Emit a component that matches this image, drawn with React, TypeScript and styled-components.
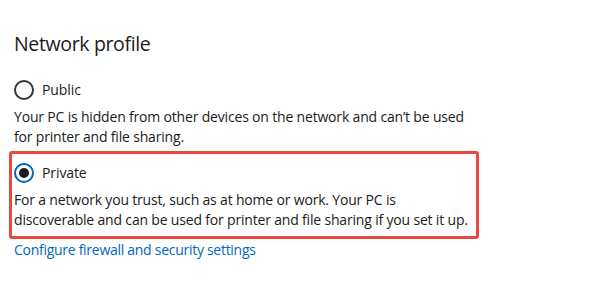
import React from 'react';
import styled, {createGlobalStyle} from "styled-components";

const GlobalStyle = createGlobalStyle`
    body {
        margin: 0;
        background: #ffffff;
        font-family: 'Open Sans', 'Noto Sans', sans-serif;
        color: #1b1b1b;
    }
`

type RadioProps = {
    checked?: boolean;
}

const Option = ({label, checked, children}: { label: string, checked?: boolean, children: React.ReactNode }) => (
    <>
        <RadioRow>
            <RadioCircle checked={checked}/>
            <Label>{label}</Label>
        </RadioRow>
        <Description>{children}</Description>
    </>
);

export default function App() {
    return (
        <>
            <GlobalStyle/>
            <Page>
                <Title>Network profile</Title>
                <OptionBlock>
                    <Option label="Public">
                        Your PC is hidden from other devices on the network and can’t be used<br/>
                        for printer and file sharing.
                    </Option>
                </OptionBlock>
                <Highlight>
                    <Option label="Private" checked>
                        For a network you trust, such as at home or work. Your PC is<br/>
                        discoverable and can be used for printer and file sharing if you set it up.
                    </Option>
                </Highlight>
                <Link href="#">Configure firewall and security settings</Link>
            </Page>
        </>
    );
}

const Page = styled.div`
    display: flex;
    flex-direction: column;
    align-items: flex-start;
    padding: 30px 0 0 14px;
`

const Title = styled.h2`
    margin: 0;
    font-size: 19.5px;
    line-height: 28px;
    font-weight: 400;
    letter-spacing: -0.35px;
`

const OptionBlock = styled.div`
    margin-top: 22px;
    display: flex;
    flex-direction: column;
`

const Highlight = styled.div`
    display: flex;
    flex-direction: column;
    width: 462px;
    margin: 4px 0 0 -5px;
    padding: 9px 0 6px 2px;
    border: 3px solid #e9483f;
    border-radius: 3px;
`

const RadioRow = styled.div`
    display: flex;
    align-items: center;
    gap: 8px;
    height: 20px;
`

const RadioCircle = styled.span<RadioProps>`
    position: relative;
    box-sizing: border-box;
    width: 20px;
    height: 20px;
    border-radius: 50%;
    border: 2px solid ${({checked}) => checked ? '#0067c0' : '#333333'};

    &::after {
        content: '';
        display: ${({checked}) => checked ? 'block' : 'none'};
        position: absolute;
        left: 3px;
        top: 3px;
        width: 10px;
        height: 10px;
        border-radius: 50%;
        background: #1b1b1b;
    }
`

const Label = styled.span`
    font-size: 14px;
    line-height: 20px;
    letter-spacing: -0.1px;
`

const Description = styled.div`
    margin-top: 7px;
    font-size: 14px;
    line-height: 20px;
    letter-spacing: -0.18px;
    white-space: nowrap;
`

const Link = styled.a`
    margin-top: 1px;
    font-size: 14px;
    line-height: 20px;
    letter-spacing: -0.28px;
    color: #0067c0;
    text-decoration: none;
`
